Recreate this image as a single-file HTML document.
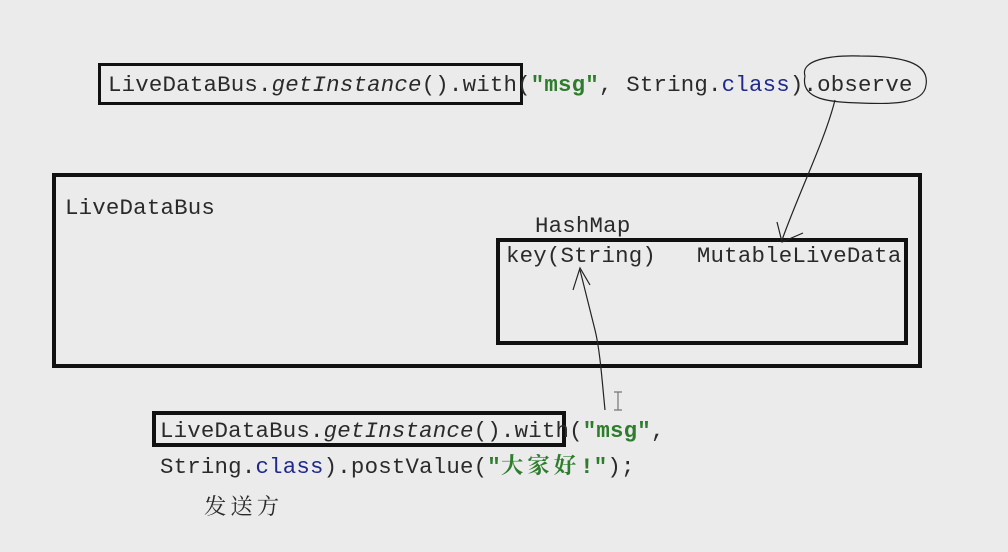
<!DOCTYPE html>
<html><head><meta charset="utf-8"><style>
body{margin:0;width:1008px;height:552px;background:#ebebeb;position:relative;overflow:hidden;font-family:"Liberation Mono","Noto Serif CJK SC",monospace;color:#2a2a2a}
.t{position:absolute;font-size:22.4px;line-height:1;white-space:pre;letter-spacing:0.2px}
.g{color:#2d7d2d;font-weight:bold}.b{color:#1f2a8a}.i{font-style:italic}
.c{letter-spacing:4px}
.box{position:absolute;border:4px solid #111;box-sizing:border-box}
</style></head><body>
<div class="box" style="left:98px;top:63px;width:425px;height:42px;border-width:3px"></div>
<div class="box" style="left:52px;top:173px;width:870px;height:195px"></div>
<div class="box" style="left:496px;top:238px;width:412px;height:107px"></div>
<div class="box" style="left:152px;top:411px;width:414px;height:36px"></div>
<div class="t" style="left:108px;top:74px">LiveDataBus.<span class="i">getInstance</span>().with(<span class="g">"msg"</span>, String.<span class="b">class</span>).observe</div>
<div class="t" style="left:65px;top:197px">LiveDataBus</div>
<div class="t" style="left:535px;top:215px">HashMap</div>
<div class="t" style="left:506px;top:245px">key(String)   MutableLiveData</div>
<div class="t" style="left:160px;top:420px">LiveDataBus.<span class="i">getInstance</span>().with(<span class="g">"msg"</span>,</div>
<div class="t" style="left:160px;top:456px">String.<span class="b">class</span>).postValue(<span class="g">"<span class="c">大家好</span>!"</span>);</div>
<div class="t c" style="left:204px;top:494px;font-family:'Noto Serif CJK SC','Noto Sans CJK SC',serif">发送方</div>
<svg style="position:absolute;left:0;top:0" width="1008" height="552" fill="none" stroke="#222" stroke-width="1.2">
<path d="M805 76 C800 60 830 55 860 56 C900 56 930 62 926 85 C924 105 890 104 860 103 C830 102 800 100 805 76"/>
<path d="M835 100 C825 140 800 190 782 240"/>
<path d="M777 222 L782 242 L803 233"/>
<path d="M605 410 C602 380 600 350 595 330 C590 310 585 290 580 270"/>
<path d="M573 290 L580 268 L590 285"/>
<path d="M618 392 L618 410 M614 392 L622 392 M614 410 L622 410" stroke="#777"/>
</svg>
</body></html>
